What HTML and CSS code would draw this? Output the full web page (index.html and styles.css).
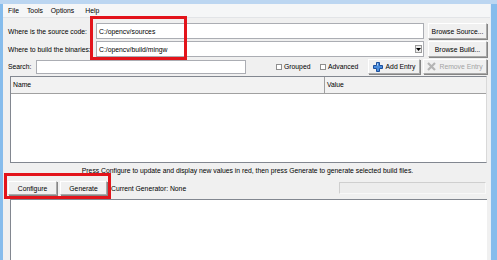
FILE: index.html
```html
<!DOCTYPE html>
<html lang="en">
<head>
    <meta charset="UTF-8">
    <meta name="viewport" content="width=device-width, initial-scale=1.0">
    <title>CMake</title>
    <link rel="stylesheet" href="styles.css">
</head>
<body>
    <div class="title-edge"></div>
    <div class="window">
        <div class="menubar">
            <span>File</span>
            <span>Tools</span>
            <span>Options</span>
            <span class="help">Help</span>
        </div>
        <div class="main">
            <div class="paths">
                <label>Where is the source code:</label>
                <div class="field"><span class="value">C:/opencv/sources</span></div>
                <button>Browse Source...</button>

                <label>Where to build the binaries:</label>
                <div class="field combo">
                    <span class="value">C:/opencv/build/mingw</span>
                    <span class="drop">
                        <svg width="5" height="3" viewBox="0 0 5 3"><path d="M0 0h5L2.5 3z" fill="#000"/></svg>
                    </span>
                </div>
                <button>Browse Build...</button>
            </div>

            <div class="search-row">
                <label>Search:</label>
                <div class="field search"></div>
                <label class="check grouped"><span class="box"></span>Grouped</label>
                <label class="check advanced"><span class="box"></span>Advanced</label>
                <button class="add">
                    <svg width="10" height="10" viewBox="0 0 10 10">
                        <path d="M3.5 0.5h3v3h3v3h-3v3h-3v-3h-3v-3h3z" fill="#4a8ddc" stroke="#1d4f9c" stroke-width="1"/>
                        <path d="M4.5 1.5v2" stroke="#b9d6f5" stroke-width="1"/>
                    </svg>
                    Add Entry
                </button>
                <button class="remove" disabled>
                    <svg width="9" height="9" viewBox="0 0 9 9">
                        <path d="M1 1l7 7M8 1l-7 7" stroke="#b4b4b4" stroke-width="2.2"/>
                    </svg>
                    Remove Entry
                </button>
            </div>

            <div class="table">
                <div class="thead">
                    <div class="th name">Name</div>
                    <div class="th">Value</div>
                </div>
                <div class="tbody"></div>
            </div>

            <p class="hint">Press Configure to update and display new values in red, then press Generate to generate selected build files.</p>

            <div class="actions">
                <button class="configure">Configure</button>
                <button class="generate">Generate</button>
                <span class="generator">Current Generator: None</span>
                <div class="progress"></div>
            </div>

            <div class="output"></div>
        </div>

        <div class="mark mark-paths"></div>
        <div class="mark mark-buttons"></div>
    </div>
</body>
</html>
```

FILE: styles.css
```css
:root {
    --frame-color: #86bcec;
    --panel-color: #f0f0f0;
    --border-color: #abadb3;
    --list-border: #828790;
    --mark-color: #e3141b;
}
body {
    margin: 0;
    background-color: var(--frame-color);
    font-family: 'Liberation Sans', Arial, sans-serif;
    font-size: 6.8px;
    color: #000;
    height: 260px;
    overflow: hidden;
}
.title-edge {
    height: 4px;
    background-color: #bcd6f1;
}
.window {
    position: relative;
    margin: 0 6px 0 3px;
    height: 256px;
    background-color: var(--panel-color);
    border-right: 1px solid #e6eef7;
    display: flex;
    flex-direction: column;
}
.menubar {
    height: 13px;
    line-height: 13px;
    padding-left: 5px;
    background-color: #f5f6f7;
    border-bottom: 1px solid #e2e4e7;
    display: flex;
    gap: 8px;
}
.menubar .help {
    margin-left: 3px;
}
.main {
    flex: 1;
    display: flex;
    flex-direction: column;
    padding: 5px 3px 0 5px;
    min-height: 0;
}
.paths {
    display: grid;
    grid-template-columns: 84px 1fr 59px;
    grid-auto-rows: 16px;
    column-gap: 4px;
    row-gap: 2px;
    align-items: center;
}
.paths label {
    white-space: nowrap;
}
.field {
    height: 100%;
    box-sizing: border-box;
    background-color: #fff;
    border: 1px solid var(--border-color);
    display: flex;
    align-items: center;
    padding-left: 2px;
}
.field .value {
    flex: 1;
}
.combo .drop {
    width: 7px;
    height: 8px;
    margin-right: 1px;
    box-sizing: border-box;
    border: 1px solid #9a9a9a;
    background-color: #ececec;
    display: flex;
    align-items: center;
    justify-content: center;
}
button {
    font-family: inherit;
    font-size: inherit;
    color: #000;
    height: 100%;
    padding: 0;
    box-sizing: border-box;
    background-color: #f0f0f0;
    border: 1px solid;
    border-color: #fff #a9a9a9 #a9a9a9 #fff;
    box-shadow: 1px 1px 0 #858585;
    display: flex;
    align-items: center;
    justify-content: center;
    gap: 3px;
}
.search-row {
    margin-top: 2px;
    height: 15px;
    display: flex;
    align-items: center;
}
.search {
    flex: 1;
    height: 14px;
    margin: 0 30px 0 5px;
}
.check {
    display: flex;
    align-items: center;
    gap: 2px;
    white-space: nowrap;
}
.check .box {
    width: 6px;
    height: 6px;
    box-sizing: border-box;
    border: 1px solid #8f8f8f;
    background-color: #fff;
}
.grouped {
    width: 36px;
}
.advanced {
    width: 41px;
    margin-left: 8px;
}
.search-row button {
    height: 15px;
}
.add {
    width: 52px;
    margin-left: 7px;
}
.remove {
    width: 64px;
    margin-left: 3px;
    color: #a3a3a3;
}
.table {
    margin: 2px 0 0 2px;
    height: 87px;
    box-sizing: border-box;
    border: 1px solid var(--list-border);
    border-right-color: #d9d9d9;
    background-color: #fff;
    display: flex;
    flex-direction: column;
}
.thead {
    height: 16px;
    display: flex;
    background-color: #f2f2f2;
    border-bottom: 1px solid #a0a0a0;
}
.th {
    line-height: 16px;
    padding-left: 2px;
    flex: 1;
}
.th.name {
    flex: 0 0 311px;
    border-right: 1px solid #a0a0a0;
}
.hint {
    margin: 2px 0 0;
    line-height: 11px;
    text-align: center;
}
.actions {
    margin-top: 5px;
    height: 14px;
    display: flex;
    align-items: center;
}
.configure {
    width: 49px;
}
.generate {
    width: 47px;
    margin-left: 3px;
}
.generator {
    margin-left: 4px;
}
.progress {
    margin: 0 1px 0 auto;
    width: 147px;
    height: 12px;
    box-sizing: border-box;
    border: 1px solid #cfcfcf;
    border-right-color: #f8f8f8;
    border-bottom-color: #f8f8f8;
    background-color: #ededed;
}
.output {
    flex: 1;
    margin: 4px 0 0 2px;
    background-color: #fff;
    border-top: 1px solid var(--list-border);
    border-left: 1px solid var(--list-border);
}
.mark {
    position: absolute;
    box-sizing: border-box;
    border: 3px solid var(--mark-color);
}
.mark-paths {
    left: 87px;
    top: 12px;
    width: 97px;
    height: 44px;
}
.mark-buttons {
    left: 1px;
    top: 169px;
    width: 107px;
    height: 26px;
}
```
